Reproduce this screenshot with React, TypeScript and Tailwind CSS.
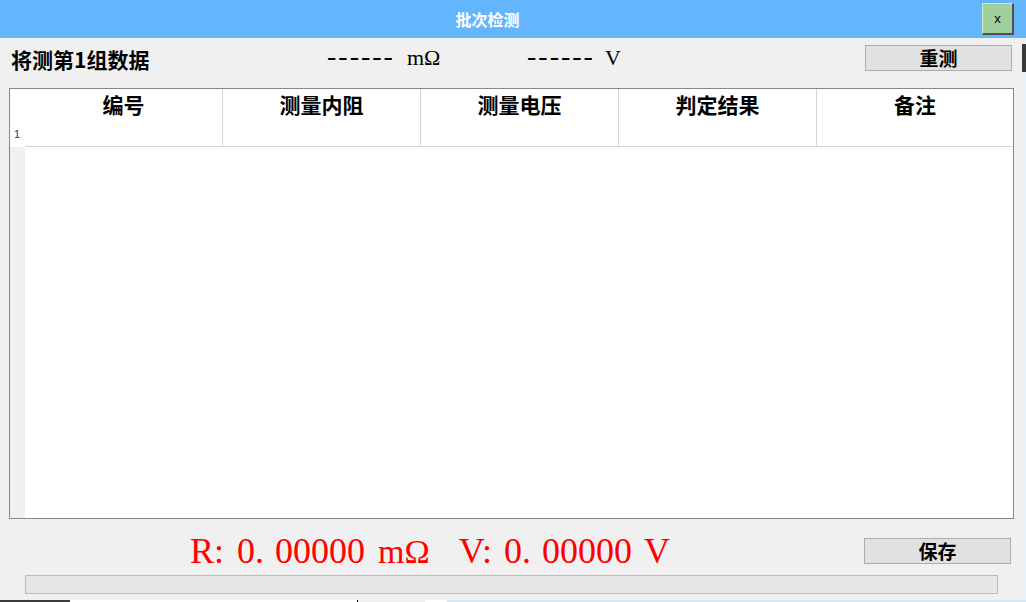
const cjk = "font-['Noto_Sans_CJK_SC',sans-serif]";
const serif = "font-['Liberation_Serif','Noto_Sans_CJK_SC',serif]";

const heads = ["编号", "测量内阻", "测量电压", "判定结果", "备注"];

function Btn({ label, cls }: { label: string; cls: string }) {
  return (
    <div
      className={`w-[147px] h-[26px] border border-[#adadad] bg-[#e1e1e1] flex items-center justify-center text-[19px] leading-[24px] font-bold text-black ${cjk} ${cls}`}
    >
      {label}
    </div>
  );
}

export default function App() {
  return (
    <div className="w-[1026px] h-[602px] overflow-hidden bg-[#f0f0f0] flex flex-col">
      {/* title bar */}
      <div className="h-[38px] bg-[#63b5fc] flex items-start shrink-0">
        <div className={`flex-1 h-[38px] flex items-center justify-center text-white text-[16px] font-bold ${cjk}`}>
          批次检测
        </div>
        <div className="ml-[7px] mr-[12px] mt-[3px] w-[32px] h-[32px] bg-[#9fd19f] border-t border-l border-t-[#cfe9cf] border-l-[#cfe9cf] border-r-2 border-b-2 border-r-[#4f4f4f] border-b-[#4f4f4f] flex items-center justify-center text-[13px] leading-none text-black font-['Liberation_Sans',sans-serif]">
          x
        </div>
      </div>

      <div className="flex flex-1">
        <div className="w-[1022px] flex flex-col">
          {/* top row */}
          <div className="h-[50px] flex items-start">
            <div className={`ml-[11px] mt-[9px] w-[316px] text-[21px] leading-[24px] font-bold text-black ${cjk}`}>
              将测第1组数据
            </div>
            <div className="w-[200px] flex items-start text-black">
              <span className={`mt-[8px] text-[28px] leading-[20px] tracking-[2px] ${serif}`}>------</span>
              <span className={`ml-[12px] mt-[9px] text-[22px] leading-[22px] ${serif}`}>mΩ</span>
            </div>
            <div className="flex items-start text-black">
              <span className={`mt-[8px] text-[28px] leading-[20px] tracking-[2px] ${serif}`}>------</span>
              <span className={`ml-[10px] mt-[9px] text-[22px] leading-[22px] ${serif}`}>V</span>
            </div>
            <Btn label="重测" cls="ml-auto mr-[10px] mt-[7px]" />
          </div>

          {/* table */}
          <div className="ml-[9px] w-[1005px] h-[431px] border border-[#828790] flex bg-white">
            <div className="w-[15px] flex flex-col">
              <div className="h-[58px] bg-white pt-[39px] pl-[4px] text-[11px] leading-[12px] text-[#1e3a6a] font-['Liberation_Sans',sans-serif]">
                1
              </div>
              <div className="flex-1 bg-[#f0f0f0]" />
            </div>
            <div className="flex-1 flex flex-col">
              <div className="h-[58px] grid grid-cols-[198px_198px_198px_198px_1fr] border-b border-[#d5d5d5]">
                {heads.map((h, i) => (
                  <div
                    key={h}
                    className={`pt-[3px] text-center text-[21px] leading-[24px] font-bold text-black ${cjk} ${
                      i < 4 ? "border-r border-[#d5d5d5]" : ""
                    }`}
                  >
                    {h}
                  </div>
                ))}
              </div>
              <div className="flex-1 bg-white" />
            </div>
          </div>

          {/* bottom readout */}
          <div className="h-[56px] flex items-start">
            <div className={`ml-[190px] mt-[14px] flex items-baseline text-[36px] leading-[36px] text-[#ff0000] ${serif}`}>
              <span>R:</span>
              <span className="ml-[13px]">0.</span>
              <span className="ml-[11px]">00000</span>
              <span className="ml-[13px] text-[34px]">mΩ</span>
              <span className="ml-[29px]">V:</span>
              <span className="ml-[12px]">0.</span>
              <span className="ml-[11px]">00000</span>
              <span className="ml-[12px]">V</span>
            </div>
            <Btn label="保存" cls="ml-auto mr-[11px] mt-[19px]" />
          </div>

          <div className="ml-[25px] w-[973px] h-[19px] bg-[#e6e6e6] border border-[#bcbcbc]" />
          <div className="h-[6px]" />
        </div>

        {/* desktop edge behind the window */}
        <div className="w-[4px] flex flex-col">
          <div className="h-[6px] bg-[#f0f0f0]" />
          <div className="h-[28px] bg-[#3a3a3a]" />
          <div className="flex-1 bg-[#e9f1f8]" />
        </div>
      </div>

      <div className="h-[2px] flex shrink-0">
        <div className="w-[70px] bg-[#3c3c3c]" />
        <div className="w-[287px] bg-white" />
        <div className="w-[1px] bg-black" />
        <div className="w-[67px] bg-[#f0f0f0]" />
        <div className="w-[22px] bg-white" />
        <div className="flex-1 bg-[#d6e8f7]" />
      </div>
    </div>
  );
}
